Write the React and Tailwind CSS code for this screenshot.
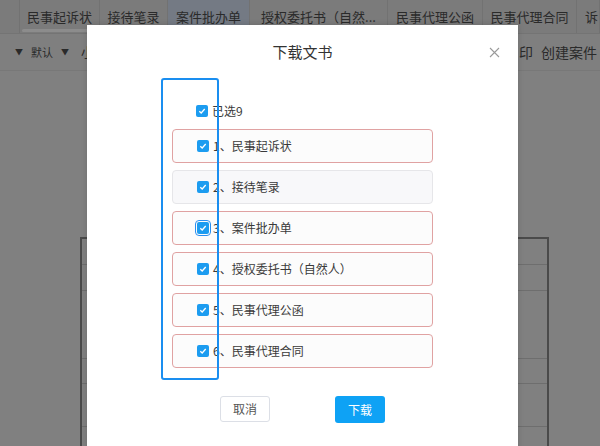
import React from 'react';

const FONT = { fontFamily: '"Noto Sans CJK SC", "Noto Sans", sans-serif' };

const tabs = [
  { label: '', w: 'w-[20px]' },
  { label: '民事起诉状', w: 'w-[80px]' },
  { label: '接待笔录', w: 'w-[68px]' },
  { label: '案件批办单', w: 'w-[82px]', active: true },
  { label: '授权委托书（自然...', w: 'w-[138px]' },
  { label: '民事代理公函', w: 'w-[95px]' },
  { label: '民事代理合同', w: 'w-[94px]' },
  { label: '诉', w: 'w-[23px]', left: true }
];

const docs = [
  { label: '1、民事起诉状', warn: true },
  { label: '2、接待笔录', warn: false },
  { label: '3、案件批办单', warn: true, focus: true },
  { label: '4、授权委托书（自然人）', warn: true },
  { label: '5、民事代理公函', warn: true },
  { label: '6、民事代理合同', warn: true }
];

function Check({ focus }) {
  return (
    <span
      className={
        'w-[12px] h-[12px] rounded-[2px] bg-[#1c9cf0] flex items-center justify-center shrink-0 ' +
        (focus ? 'outline outline-1 outline-offset-[1px] outline-[#2a8ff0]' : '')
      }
    >
      <svg width="8" height="8" viewBox="0 0 8 8">
        <polyline points="1.3,4.2 3.2,6 6.7,2" fill="none" stroke="#fff" strokeWidth="1.3" />
      </svg>
    </span>
  );
}

export default function App() {
  return (
    <div className="relative w-[600px] h-[446px] overflow-hidden bg-[#808080]" style={FONT}>
      {/* Tab strip */}
      <div className="relative flex h-[34px] bg-[#7b7b7b] border-b border-[#747474]">
        {tabs.map((t, i) => (
          <div
            key={i}
            className={
              'shrink-0 h-full flex items-center border-r border-[#727272] text-[13px] text-[#2a2a2a] whitespace-nowrap overflow-hidden ' +
              t.w +
              (t.left ? ' justify-end pr-[1px]' : ' justify-center') +
              (t.active ? ' bg-[#747a84]' : '')
            }
          >
            {t.label}
          </div>
        ))}
        <div className="absolute left-[22px] top-[29px] w-[70px] h-[3px] rounded-full bg-[#8c8c8c]" />
      </div>

      {/* Toolbar */}
      <div className="flex items-center justify-between h-[37px] bg-[#7f7f7f] border-b border-[#787878] text-[#2a2a2a]">
        <div className="flex items-center gap-[8px] pl-[15px] text-[11px]">
          <span className="text-[8px]">▼</span>
          <span>默认</span>
          <span className="text-[8px]">▼</span>
          <span className="text-[13px] ml-[4px]">小</span>
        </div>
        <div className="flex items-center gap-[8px] pr-[3px] text-[14px]">
          <span>印</span>
          <span>创建案件</span>
        </div>
      </div>

      {/* Document page with table */}
      <div className="pt-[166px]">
        <div className="ml-[80px] w-[469px] border-l-2 border-r-2 border-t-2 border-[#4a4a4a]">
          <div className="h-[26px] border-b border-[#6e6e6e]" />
          <div className="h-[26px] border-b border-[#6e6e6e]" />
          <div className="h-[68px] border-b border-[#6e6e6e]" />
          <div className="h-[25px] border-b border-[#6e6e6e]" />
          <div className="h-[43px] border-b border-[#6e6e6e]" />
          <div className="h-[40px]" />
        </div>
      </div>

      {/* Modal */}
      <div className="absolute left-[87px] top-[25px] w-[431px] h-[440px] bg-white shadow-[0_0_6px_rgba(0,0,0,0.15)]">
        <div className="relative h-[55px] flex items-center justify-center">
          <span className="text-[15px] text-[#333]">下载文书</span>
          <svg className="absolute right-[18px] top-[22px]" width="11" height="11" viewBox="0 0 11 11">
            <path d="M1 1 L10 10 M10 1 L1 10" stroke="#9a9a9a" strokeWidth="1.1" />
          </svg>
        </div>

        <div className="px-[85px] pt-[18px]">
          <div className="h-[26px] flex items-center gap-[4px] pl-[24px] text-[12px] text-[#3a3a3a]">
            <Check />
            <span>已选9</span>
          </div>
          <div className="mt-[5px] flex flex-col gap-[7px]">
            {docs.map((d) => (
              <div
                key={d.label}
                className={
                  'h-[34px] rounded-[4px] border flex items-center gap-[4px] pl-[24px] text-[12px] text-[#3a3a3a] ' +
                  (d.warn ? 'border-[#e0a2a2] bg-[#fcfcfc]' : 'border-[#e6e6e9] bg-[#f8f8fa]')
                }
              >
                <Check focus={d.focus} />
                <span>{d.label}</span>
              </div>
            ))}
          </div>

          <div className="mt-[28px] flex justify-center gap-[65px]">
            <button className="w-[50px] h-[26px] rounded-[3px] border border-[#dcdfe6] bg-white text-[12px] text-[#555]">
              取消
            </button>
            <button className="w-[50px] h-[27px] rounded-[3px] bg-[#0ea2f5] text-[12px] text-white">
              下载
            </button>
          </div>
        </div>
      </div>

      {/* Annotation highlight */}
      <div className="absolute left-[161px] top-[78px] w-[58px] h-[302px] border-2 border-[#1a8ef0] rounded-[3px]" />
    </div>
  );
}
